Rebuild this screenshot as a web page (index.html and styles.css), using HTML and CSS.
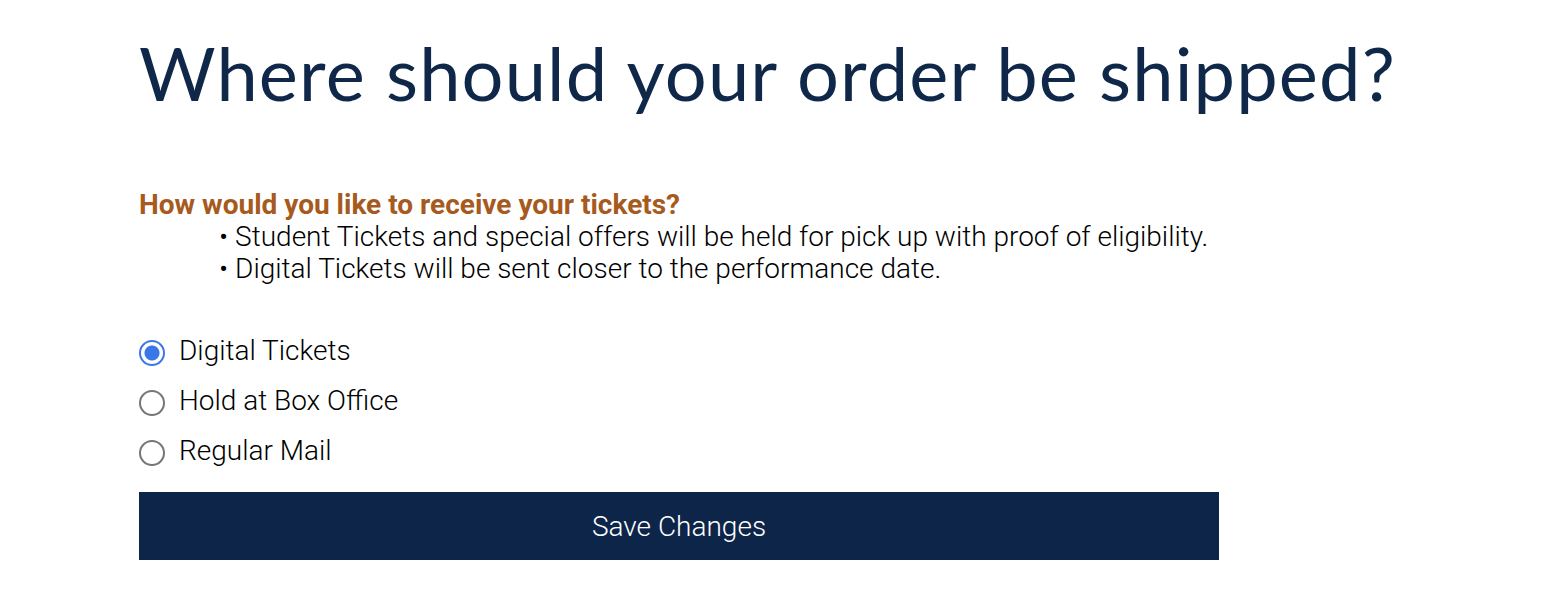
FILE: index.html
```html
<!DOCTYPE html>
<html lang="en">
<head>
    <meta charset="UTF-8">
    <title>Shipping</title>
    <link rel="stylesheet" href="styles.css">
</head>
<body>
<div class="page">
    <h1 class="title">Where should your order be shipped?</h1>

    <form class="shipping">
        <h2 class="question">How would you like to receive your tickets?</h2>
        <ul class="notes">
            <li>Student Tickets and special offers will be held for pick up with proof of eligibility.</li>
            <li>Digital Tickets will be sent closer to the performance date.</li>
        </ul>

        <div class="options">
            <label class="option">
                <input type="radio" name="delivery" value="digital" checked>
                <span>Digital Tickets</span>
            </label>
            <label class="option">
                <input type="radio" name="delivery" value="hold">
                <span>Hold at Box Office</span>
            </label>
            <label class="option">
                <input type="radio" name="delivery" value="mail">
                <span>Regular Mail</span>
            </label>
        </div>

        <button type="submit" class="save">Save Changes</button>
    </form>
</div>
</body>
</html>
```

FILE: styles.css
```css
body{
    margin: 0;
    background-color: white;
    font-family: Roboto, "Liberation Sans", sans-serif;
    color: black;
}
.page{
    padding: 18px 0 0 139px;
}
.title{
    margin: 0;
    font-family: Lato, "Open Sans", sans-serif;
    font-weight: 400;
    font-size: 74px;
    letter-spacing: 1.15px;
    line-height: 110px;
    color: #0f2748;
}
.shipping{
    width: 1080px;
    margin-top: 61px;
}
.question{
    margin: 0;
    font-size: 28px;
    font-weight: 700;
    line-height: 32px;
    color: #a65a1e;
}
.notes{
    margin: 0;
    padding-left: 80px;
    list-style: none;
}
.notes li{
    font-size: 28px;
    font-weight: 300;
    line-height: 32px;
}
.notes li::before{
    content: "\2022";
    margin-right: 7px;
}
.options{
    margin-top: 52px;
    display: flex;
    flex-direction: column;
    gap: 22px;
}
.option{
    display: flex;
    align-items: center;
    gap: 14px;
    font-size: 28px;
    font-weight: 300;
    line-height: 28px;
}
.option input{
    appearance: none;
    margin: 0;
    width: 26px;
    height: 26px;
    border: 2px solid #767676;
    border-radius: 50%;
    box-sizing: border-box;
    position: relative;
    top: 2px;
}
.option input:checked{
    border-color: #3b78e7;
    background: radial-gradient(circle, #3b78e7 0 7px, white 8px);
}
.save{
    margin-top: 27px;
    width: 100%;
    height: 68px;
    border: none;
    background-color: #0d2549;
    color: white;
    font-family: Roboto, "Liberation Sans", sans-serif;
    font-size: 28px;
    font-weight: 300;
}
```
